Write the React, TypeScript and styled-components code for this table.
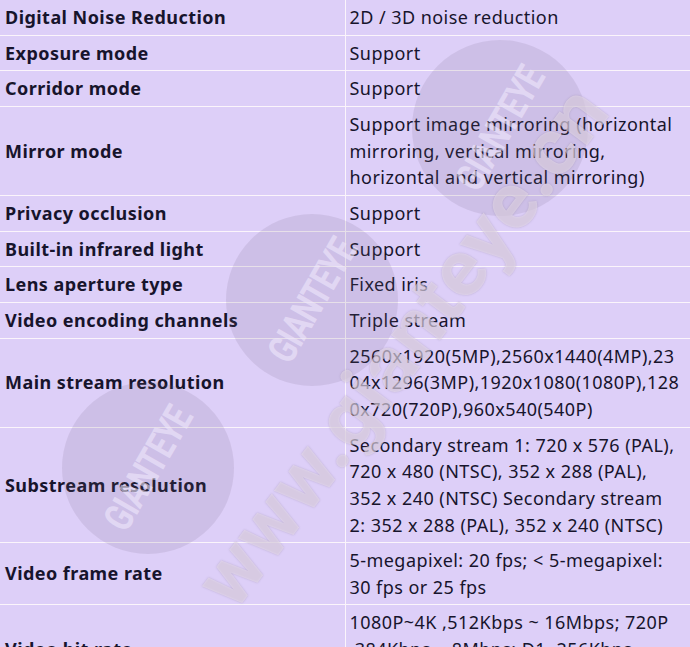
import React from 'react';
import styled, { createGlobalStyle } from 'styled-components';

const GlobalStyle = createGlobalStyle`
  html, body {
    margin: 0;
    padding: 0;
    overflow: hidden;
    background: #ddcff8;
  }
`;

const Page = styled.div`
  position: relative;
  width: 690px;
  overflow: hidden;
  font-family: 'Noto Sans', 'Open Sans', sans-serif;
  color: #17142c;
`;

const SpecTable = styled.table`
  width: 690px;
  border-collapse: collapse;
  table-layout: fixed;
  background: #ddcff8;
  margin-top: -1px;
`;

const Row = styled.tr`
  border-top: 1px solid #fbf5fb;
  border-bottom: 1px solid #fbf5fb;
`;

const Label = styled.th`
  width: 345px;
  box-sizing: border-box;
  padding: 4px 5px;
  text-align: left;
  font-weight: 700;
  font-size: 18px;
  line-height: 26.65px;
  letter-spacing: 0.45px;
  vertical-align: middle;
  border-right: 1px solid #fbf5fb;
`;

const Value = styled.td`
  padding: 4px 7px 4px 4px;
  font-size: 18px;
  line-height: 26.65px;
  letter-spacing: 0.45px;
  vertical-align: middle;
  overflow-wrap: break-word;
`;

const Watermark = styled.div`
  position: absolute;
  inset: 0;
  pointer-events: none;
  overflow: hidden;
`;

const Disc = styled.div<{ $x: number; $y: number; $r: number }>`
  position: absolute;
  left: ${(p) => p.$x - p.$r}px;
  top: ${(p) => p.$y - p.$r}px;
  width: ${(p) => p.$r * 2}px;
  height: ${(p) => p.$r * 2}px;
  border-radius: 50%;
  background: rgba(110, 100, 130, 0.14);
  display: flex;
  align-items: center;
  justify-content: center;
`;

const DiscText = styled.span`
  font-family: 'Roboto', 'Liberation Sans', sans-serif;
  font-weight: 700;
  font-size: 40px;
  letter-spacing: -1px;
  color: rgba(240, 232, 252, 0.6);
  transform: rotate(-60deg) scaleX(0.75);
  white-space: nowrap;
`;

const SiteText = styled.div`
  position: absolute;
  left: 402px;
  top: 346px;
  transform: translate(-50%, -50%) rotate(-53deg);
  font-family: 'Roboto', 'Liberation Sans', sans-serif;
  font-weight: 700;
  font-size: 80px;
  letter-spacing: 1px;
  white-space: nowrap;
  color: rgba(238, 228, 242, 0.55);
  text-shadow: 0 0 2px rgba(120, 105, 130, 0.35);
`;

type Spec = { label: string; value: string };

const specs: Spec[] = [
  { label: 'Digital Noise Reduction', value: '2D / 3D noise reduction' },
  { label: 'Exposure mode', value: 'Support' },
  { label: 'Corridor mode', value: 'Support' },
  {
    label: 'Mirror mode',
    value:
      'Support image mirroring (horizontal mirroring, vertical mirroring, horizontal and vertical mirroring)',
  },
  { label: 'Privacy occlusion', value: 'Support' },
  { label: 'Built-in infrared light', value: 'Support' },
  { label: 'Lens aperture type', value: 'Fixed iris' },
  { label: 'Video encoding channels', value: 'Triple stream' },
  {
    label: 'Main stream resolution',
    value:
      '2560x1920(5MP),2560x1440(4MP),2304x1296(3MP),1920x1080(1080P),1280x720(720P),960x540(540P)',
  },
  {
    label: 'Substream resolution',
    value:
      'Secondary stream 1: 720 x 576 (PAL), 720 x 480 (NTSC), 352 x 288 (PAL), 352 x 240 (NTSC) Secondary stream 2: 352 x 288 (PAL), 352 x 240 (NTSC)',
  },
  {
    label: 'Video frame rate',
    value: '5-megapixel: 20 fps; < 5-megapixel: 30 fps or 25 fps',
  },
  {
    label: 'Video bit rate',
    value: '1080P~4K ,512Kbps ~ 16Mbps; 720P ,384Kbps ~ 8Mbps; D1 ,256Kbps ~ 4Mbps',
  },
];

const discs = [
  { x: 500, y: 128, r: 88 },
  { x: 312, y: 300, r: 86 },
  { x: 148, y: 468, r: 86 },
];

export default function App() {
  return (
    <>
      <GlobalStyle />
      <Page>
        <SpecTable>
          <tbody>
            {specs.map((s) => (
              <Row key={s.label}>
                <Label>{s.label}</Label>
                <Value>{s.value}</Value>
              </Row>
            ))}
          </tbody>
        </SpecTable>
        <Watermark>
          {discs.map((d, i) => (
            <Disc key={i} $x={d.x} $y={d.y} $r={d.r}>
              <DiscText>GIANTEYE</DiscText>
            </Disc>
          ))}
          <SiteText>www.gianteye.cn</SiteText>
        </Watermark>
      </Page>
    </>
  );
}
